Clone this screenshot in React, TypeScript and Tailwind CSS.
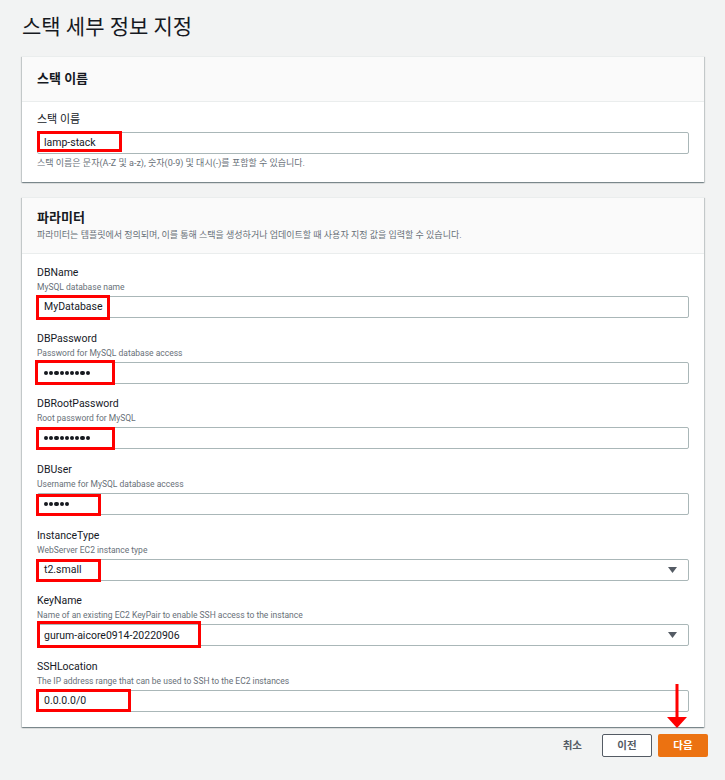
import type { ReactNode } from "react";

type Param = {
  name: string;
  hint: string;
  value: string;
  secret?: number;
  select?: boolean;
  mark: { top: number; left: number; w: number; h: number };
};

const params: Param[] = [
  { name: "DBName", hint: "MySQL database name", value: "MyDatabase", mark: { top: -1, left: -1, w: 74, h: 25 } },
  { name: "DBPassword", hint: "Password for MySQL database access", value: "", secret: 9, mark: { top: -2, left: -2, w: 80, h: 25 } },
  { name: "DBRootPassword", hint: "Root password for MySQL", value: "", secret: 9, mark: { top: 0, left: -1, w: 79, h: 23 } },
  { name: "DBUser", hint: "Username for MySQL database access", value: "", secret: 5, mark: { top: 1, left: -1, w: 65, h: 22 } },
  { name: "InstanceType", hint: "WebServer EC2 instance type", value: "t2.small", select: true, mark: { top: 0, left: -1, w: 65, h: 23 } },
  { name: "KeyName", hint: "Name of an existing EC2 KeyPair to enable SSH access to the instance", value: "gurum-aicore0914-20220906", select: true, mark: { top: -3, left: 0, w: 164, h: 27 } },
  { name: "SSHLocation", hint: "The IP address range that can be used to SSH to the EC2 instances", value: "0.0.0.0/0", mark: { top: -1, left: -1, w: 95, h: 23 } }
];

function Panel({ header, children }: { header: ReactNode; children: ReactNode }) {
  return (
    <section className="border-t border-[#eaeded] bg-white shadow-[0_1px_1px_0_rgba(0,28,36,0.3),1px_1px_1px_0_rgba(0,28,36,0.15),-1px_1px_1px_0_rgba(0,28,36,0.15)]">
      <header className="border-b border-[#eaeded] bg-[#fafafa] px-[15px]">{header}</header>
      <div className="px-[15px]">{children}</div>
    </section>
  );
}

function FieldBox({ param }: { param: Pick<Param, "value" | "secret" | "select" | "mark"> }) {
  return (
    <div className="relative flex h-[22px] items-center rounded-[2px] border border-[#aab7b8] bg-white pl-[6px] pr-[8px]">
      {param.secret ? (
        <span className="flex flex-1 items-center gap-[1px]">
          {Array.from({ length: param.secret }).map((_, i) => (
            <span key={i} className="h-[4.2px] w-[4.2px] rounded-full bg-[#16191f]" />
          ))}
        </span>
      ) : (
        <span className="flex-1 text-[10.5px] text-[#16191f]">{param.value}</span>
      )}
      {param.select ? (
        <svg width="9" height="6" viewBox="0 0 9 6" className="mr-[3px]">
          <path d="M0 0h9L4.5 6z" fill="#545b64" />
        </svg>
      ) : null}
      <div
        className="absolute border-[3px] border-[#f00]"
        style={{ top: param.mark.top - 1, left: param.mark.left - 1, width: param.mark.w, height: param.mark.h }}
      />
    </div>
  );
}

export default function App() {
  return (
    <div
      className="relative min-h-[780px] w-[725px] bg-[#f2f3f3] pl-[22px] pr-[21px] text-[#16191f]"
      style={{ fontFamily: 'Roboto, "Noto Sans CJK KR", sans-serif' }}
    >
      <h1 className="pt-[12px] text-[21px] leading-[30px] font-normal">스택 세부 정보 지정</h1>

      <div className="mt-[14px]">
        <Panel
          header={
            <div className="flex h-[44px] items-center">
              <h2 className="text-[13px] font-bold">스택 이름</h2>
            </div>
          }
        >
          <div className="pt-[11px] pb-[13px]">
            <div className="text-[11px] leading-[14px]">스택 이름</div>
            <div className="mt-[5px]">
              <FieldBox param={{ value: "lamp-stack", mark: { top: -1, left: 0, w: 85, h: 21 } }} />
            </div>
            <p className="mt-[3px] text-[9px] leading-[12px] text-[#687078]">
              스택 이름은 문자(A-Z 및 a-z), 숫자(0-9) 및 대시(-)를 포함할 수 있습니다.
            </p>
          </div>
        </Panel>
      </div>

      <div className="mt-[15px]">
        <Panel
          header={
            <div className="pt-[10px] pb-[11px]">
              <h2 className="text-[13px] leading-[20px] font-bold">파라미터</h2>
              <p className="text-[9px] leading-[14px] text-[#687078]">
                파라미터는 템플릿에서 정의되며, 이를 통해 스택을 생성하거나 업데이트할 때 사용자 지정 값을 입력할 수 있습니다.
              </p>
            </div>
          }
        >
          <div className="flex flex-col gap-[13.7px] pt-[12px] pb-[15px]">
            {params.map((param) => (
              <div key={param.name}>
                <div className="text-[10.5px] leading-[14px]">{param.name}</div>
                <div className="text-[8.5px] leading-[14px] text-[#687078]">{param.hint}</div>
                <div className="mt-[2px]">
                  <FieldBox param={param} />
                </div>
              </div>
            ))}
          </div>
        </Panel>
      </div>

      <footer className="mt-[7px] flex items-center justify-end gap-[6px]">
        <button className="mr-[14px] text-[10.5px] font-bold text-[#545b64]">취소</button>
        <button className="h-[23px] w-[50px] rounded-[2px] border border-[#545b64] bg-white text-[10.5px] font-bold text-[#545b64]">
          이전
        </button>
        <button className="-mr-[4px] h-[23px] w-[50px] rounded-[2px] bg-[#ec7211] text-[10.5px] font-bold text-white">
          다음
        </button>
      </footer>

      <svg className="absolute top-[684px] left-[667px]" width="20" height="44" viewBox="0 0 20 44">
        <rect x="8.5" y="0" width="3" height="34" fill="#f00" />
        <path d="M0 33h20L10 44z" fill="#f00" />
      </svg>
    </div>
  );
}
